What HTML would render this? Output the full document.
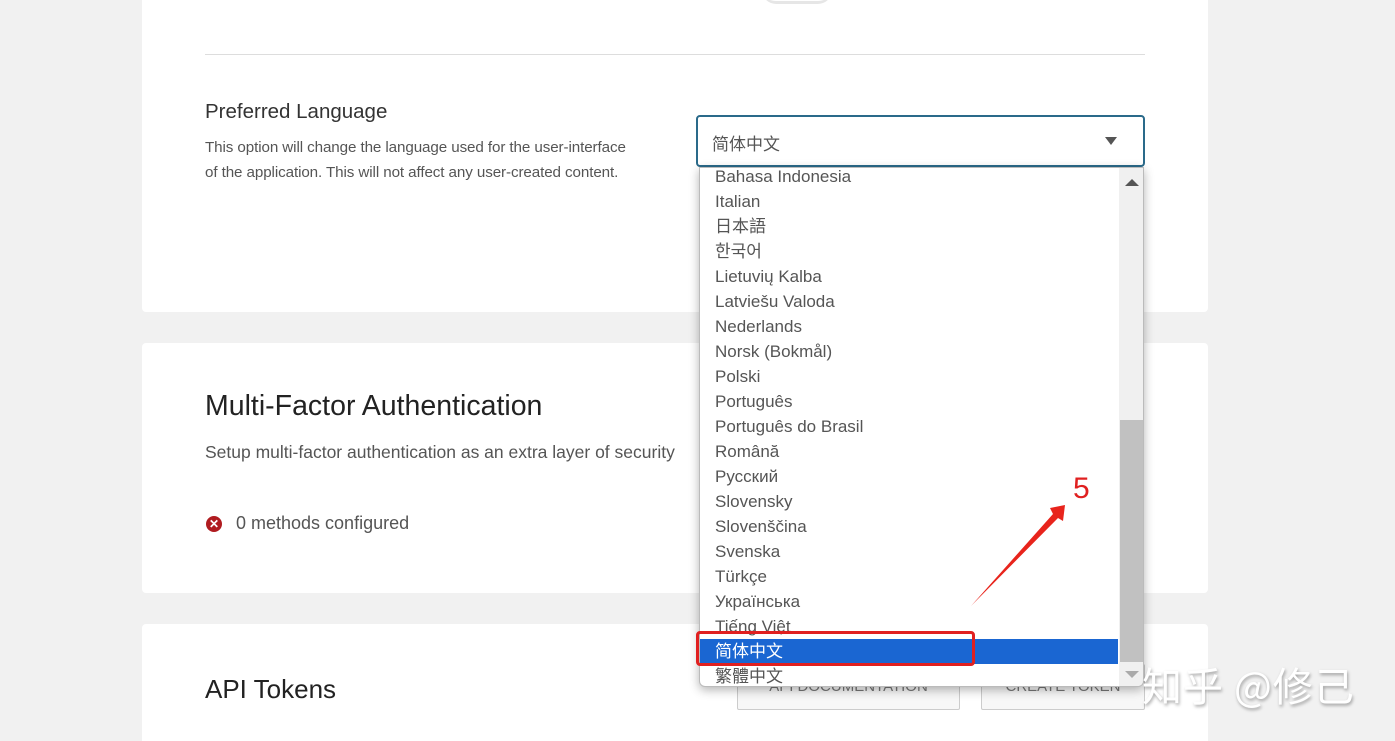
<!DOCTYPE html>
<html><head><meta charset="utf-8"><style>
*{margin:0;padding:0;box-sizing:border-box}
html,body{width:1395px;height:741px;overflow:hidden}
body{background:#f1f1f1;font-family:"Liberation Sans","Noto Sans CJK SC",sans-serif;position:relative;color:#333}
.card{position:absolute;left:142px;width:1066px;background:#fff;border-radius:4px}
.abs{position:absolute;white-space:nowrap}
.btn{position:absolute;border:1px solid #ccc;background:#f7f7f7;color:#777;font-size:15px;text-align:center;border-radius:2px}
.list{position:absolute;left:699px;top:167px;width:445px;height:520px;background:#fff;border:1px solid #bbb;border-radius:0 0 6px 6px;box-shadow:0 3px 10px rgba(0,0,0,.3);overflow:hidden}
.it{position:absolute;left:15px;font-size:17px;color:#555;line-height:25px;font-family:"Liberation Sans","Noto Sans CJK SC","Noto Sans CJK JP","Noto Sans CJK KR",sans-serif}
</style></head><body>
<div class="card" style="top:-10px;height:322px">
<div class="abs" style="left:620px;top:0;width:70px;height:14px;border-radius:0 0 35px 35px;border-bottom:3px solid #e6e6e6"></div>
<div class="abs" style="left:63px;top:64px;width:940px;height:1px;background:#ddd"></div>
<div class="abs" style="left:63px;top:110px;font-size:20.5px;color:#333">Preferred Language</div>
<div class="abs" style="left:63px;top:145px;font-size:15.2px;color:#555;line-height:25px;letter-spacing:-0.1px">This option will change the language used for the user-interface<br>of the application. This will not affect any user-created content.</div>
<div class="abs" style="left:950px;top:245px;width:51px;height:48px;background:#2a6a8a;border-radius:3px"></div>
</div>
<div class="card" style="top:343px;height:250px">
<div class="abs" style="left:63px;top:47px;font-size:28.5px;color:#222">Multi-Factor Authentication</div>
<div class="abs" style="left:63px;top:99px;font-size:17.5px;color:#555">Setup multi-factor authentication as an extra layer of security</div>
<div class="abs" style="left:64px;top:173px;width:16px;height:16px;border-radius:50%;background:#b01c20;color:#fff;font-size:12px;line-height:16px;text-align:center;font-weight:bold">✕</div>
<div class="abs" style="left:94px;top:170px;font-size:18px;color:#555">0 methods configured</div>
<div class="abs" style="left:950px;top:157px;width:51px;height:48px;border:1px solid #ccc;background:#f7f7f7"></div>
</div>
<div class="card" style="top:624px;height:117px;border-radius:4px 4px 0 0">
<div class="abs" style="left:63px;top:50px;font-size:26px;color:#222">API Tokens</div>
</div>
<div class="btn" style="left:737px;top:664px;width:223px;height:46px;line-height:44px">API DOCUMENTATION</div>
<div class="btn" style="left:981px;top:664px;width:164px;height:46px;line-height:44px">CREATE TOKEN</div>
<div class="abs" style="left:696px;top:115px;width:449px;height:52px;border:2px solid #2a6a8a;border-radius:4px;background:#fff"></div>
<div class="abs" style="left:712px;top:131px;font-size:17px;color:#555;font-family:'Noto Sans CJK SC',sans-serif;line-height:24px">简体中文</div>
<div class="abs" style="left:1105px;top:137px;width:0;height:0;border-left:6px solid transparent;border-right:6px solid transparent;border-top:8px solid #555"></div>
<div class="list">
<div class="abs" style="left:419px;top:0;width:25px;height:520px;background:#f0f0f0"></div>
<div class="abs" style="left:420px;top:252px;width:23px;height:242px;background:#c1c1c1"></div>
<div class="abs" style="left:425px;top:11px;border-left:7px solid transparent;border-right:7px solid transparent;border-bottom:7px solid #555"></div>
<div class="abs" style="left:425px;top:503px;border-left:7px solid transparent;border-right:7px solid transparent;border-top:7px solid #aaa"></div>
<div class="abs" style="left:0;top:471px;width:418px;height:25px;background:#1a66d2"></div>
<div class="it" style="top:-4px">Bahasa Indonesia</div>
<div class="it" style="top:21px">Italian</div>
<div class="it" style="top:46px">日本語</div>
<div class="it" style="top:71px">한국어</div>
<div class="it" style="top:96px">Lietuvių Kalba</div>
<div class="it" style="top:121px">Latviešu Valoda</div>
<div class="it" style="top:146px">Nederlands</div>
<div class="it" style="top:171px">Norsk (Bokmål)</div>
<div class="it" style="top:196px">Polski</div>
<div class="it" style="top:221px">Português</div>
<div class="it" style="top:246px">Português do Brasil</div>
<div class="it" style="top:271px">Română</div>
<div class="it" style="top:296px">Русский</div>
<div class="it" style="top:321px">Slovensky</div>
<div class="it" style="top:346px">Slovenščina</div>
<div class="it" style="top:371px">Svenska</div>
<div class="it" style="top:396px">Türkçe</div>
<div class="it" style="top:421px">Українська</div>
<div class="it" style="top:446px">Tiếng Việt</div>
<div class="it" style="top:471px;color:#fff">简体中文</div>
<div class="it" style="top:496px">繁體中文</div>
</div>
<div class="abs" style="left:696px;top:631px;width:279px;height:35px;border:3px solid #e02020;border-radius:4px"></div>
<svg class="abs" style="left:0;top:0" width="1395" height="741"><polygon points="971,606 1053,514 1050,508 1065,505 1063,521 1058,518" fill="#e8241c"/></svg>
<div class="abs" style="left:1073px;top:472px;font-size:30px;color:#e02020">5</div>
<div class="abs" style="left:1142px;top:658px;font-size:40px;color:#fff;text-shadow:1px 2px 3px rgba(0,0,0,.35);font-family:'Noto Sans CJK SC',sans-serif;line-height:52px;letter-spacing:1px">知乎 @修己</div>
</body></html>
